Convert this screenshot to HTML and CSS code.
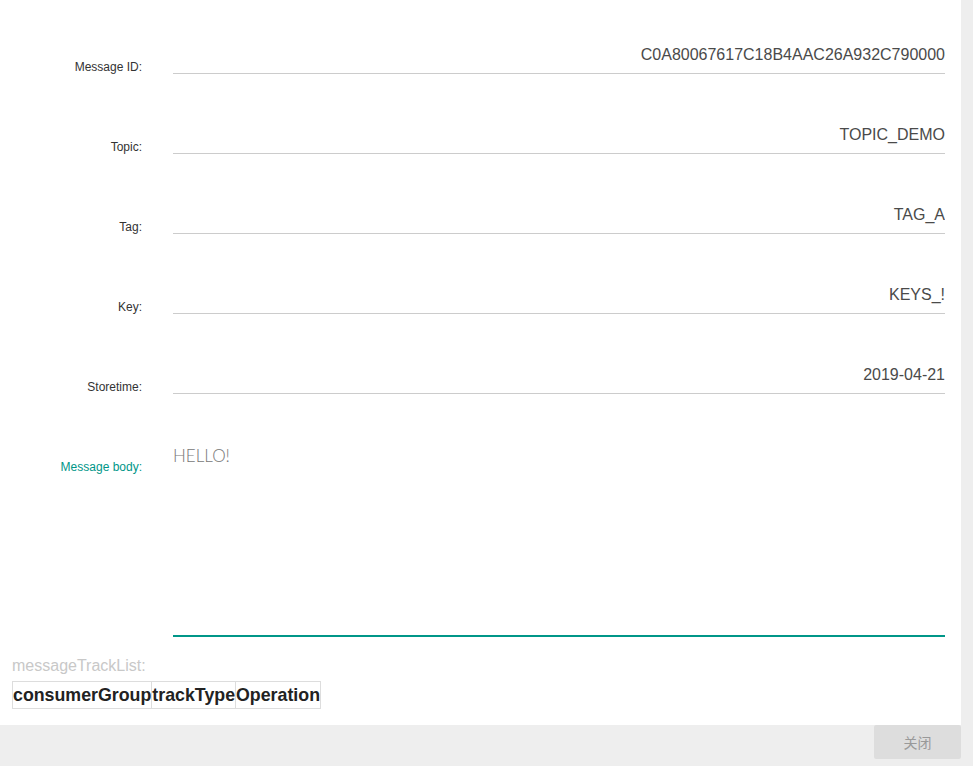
FILE: index.html
```html
<!DOCTYPE html>
<html>
<head>
<meta charset="utf-8">
<link rel="stylesheet" href="styles.css">
</head>
<body>
<div class="page">
  <div class="top">
    <div class="content">
      <form class="form">
        <div class="row">
          <label class="label">Message ID:</label>
          <div class="input">C0A80067617C18B4AAC26A932C790000</div>
        </div>
        <div class="row">
          <label class="label">Topic:</label>
          <div class="input">TOPIC_DEMO</div>
        </div>
        <div class="row">
          <label class="label">Tag:</label>
          <div class="input">TAG_A</div>
        </div>
        <div class="row">
          <label class="label">Key:</label>
          <div class="input">KEYS_!</div>
        </div>
        <div class="row">
          <label class="label">Storetime:</label>
          <div class="input">2019-04-21</div>
        </div>
        <div class="row body-row">
          <label class="label active">Message body:</label>
          <div class="textarea">HELLO!</div>
        </div>
      </form>
      <div class="track">
        <div class="track-title">messageTrackList:</div>
        <table class="track-table">
          <tr><th>consumerGroup</th><th>trackType</th><th>Operation</th></tr>
        </table>
      </div>
    </div>
    <div class="scrollbar"></div>
  </div>
  <div class="footer">
    <button class="btn" type="button">关闭</button>
  </div>
</div>
</body>
</html>
```

FILE: styles.css
```css
html, body {
  margin: 0;
  padding: 0;
  background: #fff;
}
body {
  font-family: "Liberation Sans", Arial, sans-serif;
  color: #333;
}
.page {
  width: 973px;
  height: 766px;
  display: flex;
  flex-direction: column;
}
.top {
  height: 725px;
  display: flex;
}
.content {
  width: 961px;
  background: #fff;
}
.scrollbar {
  flex: 1;
  background: #eeeeee;
}
.form {
  margin: 0;
}
.row {
  display: flex;
  align-items: flex-end;
  height: 74px;
  padding-bottom: 6px;
}
.label {
  width: 142px;
  flex: none;
  text-align: right;
  font-size: 12px;
  line-height: 14px;
  color: #333;
}
.label.active {
  color: #009688;
}
.input {
  margin-left: 31px;
  width: 772px;
  flex: none;
  text-align: right;
  font-size: 16px;
  line-height: 20px;
  padding-bottom: 8px;
  border-bottom: 1px solid #cccccc;
  color: #4a4a4a;
  white-space: nowrap;
  overflow: hidden;
}
.body-row {
  height: auto;
  align-items: flex-start;
  padding-top: 40px;
  padding-bottom: 0;
}
.body-row .label {
  margin-top: 20px;
}
.textarea {
  margin-left: 31px;
  width: 772px;
  flex: none;
  font-family: Lato, "Open Sans", sans-serif;
  font-weight: 300;
  font-size: 17px;
  line-height: 24px;
  padding-top: 4px;
  color: #777;
  border-bottom: 2px solid #009688;
  box-sizing: border-box;
  height: 197px;
}
.track {
  padding: 19px 12px 0;
}
.track-title {
  font-size: 16px;
  line-height: 20px;
  color: #c8c8c8;
}
.track-table {
  margin-top: 5px;
  border-collapse: collapse;
}
.track-table th {
  border: 1px solid #dddddd;
  padding: 0;
  font-size: 17.8px;
  line-height: 26px;
  font-weight: bold;
  color: #222;
  text-align: left;
}
.footer {
  flex: 1;
  background: #eeeeee;
  display: flex;
  justify-content: flex-end;
  align-items: flex-start;
  padding-right: 12px;
}
.btn {
  width: 87px;
  height: 34px;
  border: none;
  border-radius: 2px;
  background: #dddddd;
  color: #999;
  font-family: "Liberation Sans", "Noto Sans CJK SC", sans-serif;
  font-size: 14px;
  padding: 0;
}
```
